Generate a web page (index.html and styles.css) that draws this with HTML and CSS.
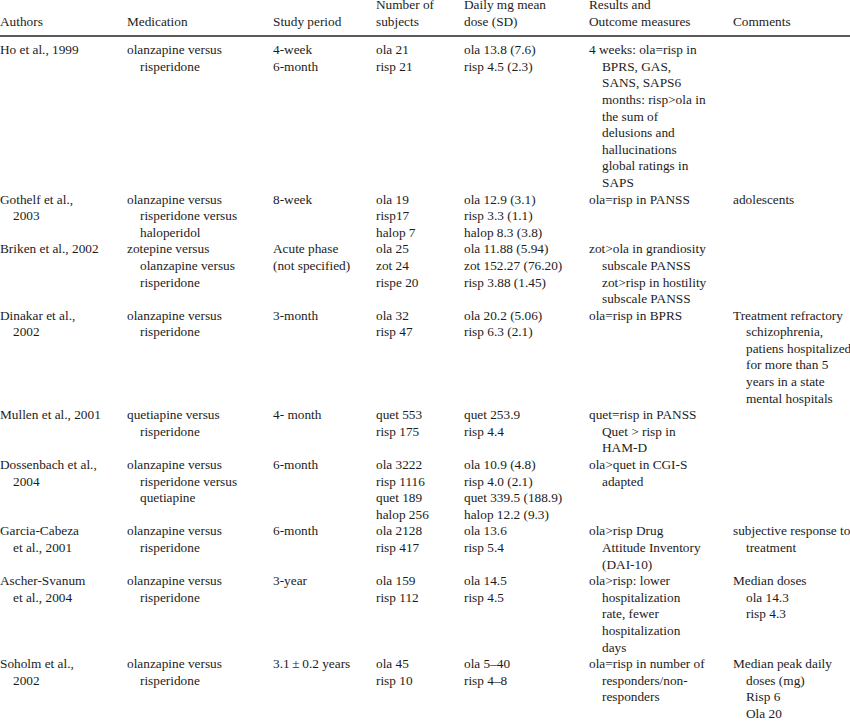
FILE: index.html
```html
<!DOCTYPE html>
<html>
<head>
<meta charset="utf-8">
<link rel="stylesheet" href="styles.css">
</head>
<body>
<table class="tbl">
<colgroup>
<col class="c1"><col class="c2"><col class="c3"><col class="c4"><col class="c5"><col class="c6"><col class="c7">
</colgroup>
<thead>
<tr>
<th>Authors</th>
<th>Medication</th>
<th>Study period</th>
<th>Number of<br>subjects</th>
<th>Daily mg mean<br>dose (SD)</th>
<th>Results and<br>Outcome measures</th>
<th>Comments</th>
</tr>
</thead>
<tbody>
<tr class="first">
<td class="h">Ho et al., 1999</td>
<td class="h">olanzapine versus<br>risperidone</td>
<td>4-week<br>6-month</td>
<td>ola 21<br>risp 21</td>
<td>ola 13.8 (7.6)<br>risp 4.5 (2.3)</td>
<td class="h">4 weeks: ola=risp in<br>BPRS, GAS,<br>SANS, SAPS6<br>months: risp&gt;ola in<br>the sum of<br>delusions and<br>hallucinations<br>global ratings in<br>SAPS</td>
<td></td>
</tr>
<tr>
<td class="h">Gothelf et al.,<br>2003</td>
<td class="h">olanzapine versus<br>risperidone versus<br>haloperidol</td>
<td>8-week</td>
<td>ola 19<br>risp17<br>halop 7</td>
<td>ola 12.9 (3.1)<br>risp 3.3 (1.1)<br>halop 8.3 (3.8)</td>
<td class="h">ola=risp in PANSS</td>
<td class="h">adolescents</td>
</tr>
<tr>
<td class="h">Briken et al., 2002</td>
<td class="h">zotepine versus<br>olanzapine versus<br>risperidone</td>
<td>Acute phase<br>(not specified)</td>
<td>ola 25<br>zot 24<br>rispe 20</td>
<td>ola 11.88 (5.94)<br>zot 152.27 (76.20)<br>risp 3.88 (1.45)</td>
<td class="h">zot&gt;ola in grandiosity<br>subscale PANSS<br>zot&gt;risp in hostility<br>subscale PANSS</td>
<td></td>
</tr>
<tr>
<td class="h">Dinakar et al.,<br>2002</td>
<td class="h">olanzapine versus<br>risperidone</td>
<td>3-month</td>
<td>ola 32<br>risp 47</td>
<td>ola 20.2 (5.06)<br>risp 6.3 (2.1)</td>
<td class="h">ola=risp in BPRS</td>
<td class="h">Treatment refractory<br>schizophrenia,<br>patiens hospitalized<br>for more than 5<br>years in a state<br>mental hospitals</td>
</tr>
<tr>
<td class="h">Mullen et al., 2001</td>
<td class="h">quetiapine versus<br>risperidone</td>
<td>4- month</td>
<td>quet 553<br>risp 175</td>
<td>quet 253.9<br>risp 4.4</td>
<td class="h">quet=risp in PANSS<br>Quet &gt; risp in<br>HAM-D</td>
<td></td>
</tr>
<tr>
<td class="h">Dossenbach et al.,<br>2004</td>
<td class="h">olanzapine versus<br>risperidone versus<br>quetiapine</td>
<td>6-month</td>
<td>ola 3222<br>risp 1116<br>quet 189<br>halop 256</td>
<td>ola 10.9 (4.8)<br>risp 4.0 (2.1)<br>quet 339.5 (188.9)<br>halop 12.2 (9.3)</td>
<td class="h">ola&gt;quet in CGI-S<br>adapted</td>
<td></td>
</tr>
<tr>
<td class="h">Garcia-Cabeza<br>et al., 2001</td>
<td class="h">olanzapine versus<br>risperidone</td>
<td>6-month</td>
<td>ola 2128<br>risp 417</td>
<td>ola 13.6<br>risp 5.4</td>
<td class="h">ola&gt;risp Drug<br>Attitude Inventory<br>(DAI-10)</td>
<td class="h">subjective response to<br>treatment</td>
</tr>
<tr>
<td class="h">Ascher-Svanum<br>et al., 2004</td>
<td class="h">olanzapine versus<br>risperidone</td>
<td>3-year</td>
<td>ola 159<br>risp 112</td>
<td>ola 14.5<br>risp 4.5</td>
<td class="h">ola&gt;risp: lower<br>hospitalization<br>rate, fewer<br>hospitalization<br>days</td>
<td class="h">Median doses<br>ola 14.3<br>risp 4.3</td>
</tr>
<tr>
<td class="h">Soholm et al.,<br>2002</td>
<td class="h">olanzapine versus<br>risperidone</td>
<td>3.1&#8201;±&#8201;0.2 years</td>
<td>ola 45<br>risp 10</td>
<td>ola 5–40<br>risp 4–8</td>
<td class="h">ola=risp in number of<br>responders/non-<br>responders</td>
<td class="h">Median peak daily<br>doses (mg)<br>Risp 6<br>Ola 20</td>
</tr>
</tbody>
</table>
</body>
</html>
```
FILE: styles.css
```css
html, body {
  margin: 0;
  padding: 0;
  background: #ffffff;
}
body {
  font-family: "Liberation Serif", "Times New Roman", serif;
  font-size: 13.3px;
  line-height: 16.6px;
  color: #1c1c1c;
  overflow: hidden;
}
.tbl {
  width: 850px;
  table-layout: fixed;
  border-collapse: collapse;
  border-spacing: 0;
  margin-top: -3px;
}
.c1 { width: 127px; }
.c2 { width: 146px; }
.c3 { width: 103px; }
.c4 { width: 88px; }
.c5 { width: 125px; }
.c6 { width: 144px; }
.c7 { width: 117px; }
th, td {
  padding: 0;
  text-align: left;
  vertical-align: top;
  white-space: nowrap;
  font-weight: normal;
}
th {
  vertical-align: bottom;
  padding-bottom: 5px;
  border-bottom: 2px solid #5a5a5a;
}
.first td {
  padding-top: 5px;
}
.h {
  padding-left: 13px;
  text-indent: -13px;
}
```
